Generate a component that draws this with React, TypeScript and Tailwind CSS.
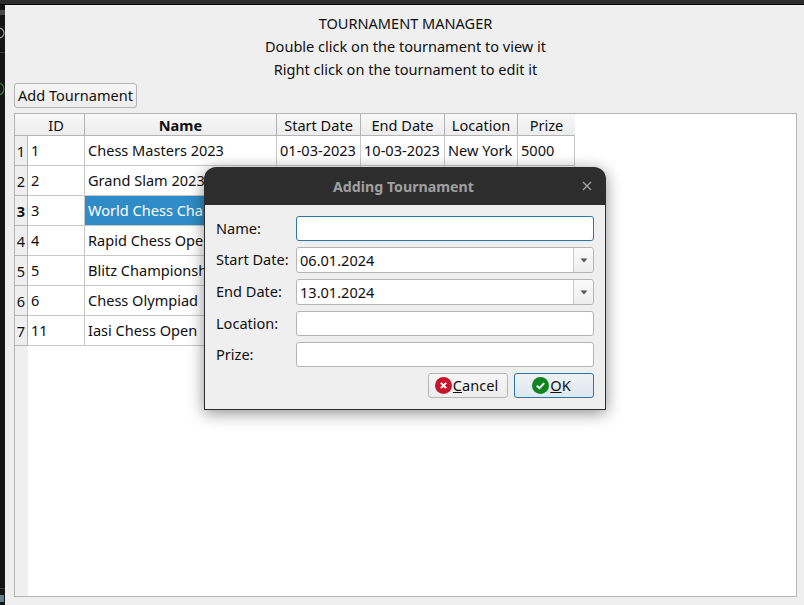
const cols = [
  { w: "w-[57px]", label: "ID" },
  { w: "w-[192px]", label: "Name", bold: true },
  { w: "w-[84px]", label: "Start Date" },
  { w: "w-[84px]", label: "End Date" },
  { w: "w-[73px]", label: "Location" },
  { w: "w-[57px]", label: "Prize" },
];

const rows = [
  ["1", "Chess Masters 2023", "01-03-2023", "10-03-2023", "New York", "5000"],
  ["2", "Grand Slam 2023", "", "", "", ""],
  ["3", "World Chess Championship", "", "", "", ""],
  ["4", "Rapid Chess Open", "", "", "", ""],
  ["5", "Blitz Championship", "", "", "", ""],
  ["6", "Chess Olympiad", "", "", "", ""],
  ["11", "Iasi Chess Open", "", "", "", ""],
];

function Table() {
  return (
    <div className="flex h-[484px] w-[783px] flex-col border border-[#b4b4b4] bg-white">
      <div className="flex h-[22px] w-full">
        <div className="h-[22px] w-[13px] shrink-0 border-b border-[#b4b4b4] bg-gradient-to-b from-[#f9f9f9] to-[#ececec]" />
        {cols.map((c) => (
          <div
            key={c.label}
            className={`${c.w} flex h-[22px] shrink-0 items-center justify-center border-b border-r border-[#b4b4b4] bg-gradient-to-b from-[#f9f9f9] to-[#ececec] pt-[1px] last:border-r-0 ${c.bold ? "font-bold" : ""}`}
          >
            {c.label}
          </div>
        ))}
      </div>
      {rows.map((r, i) => (
        <div key={r[0]} className="flex h-[30px]">
          <div
            className={`flex h-[30px] w-[13px] shrink-0 items-center justify-center border-b border-r border-[#b4b4b4] bg-[#efefef] pt-[1px] ${i === 2 ? "font-bold" : ""}`}
          >
            {i + 1}
          </div>
          {r.map((v, j) => (
            <div
              key={j}
              className={`${cols[j].w} flex h-[30px] shrink-0 items-center overflow-hidden whitespace-nowrap border-b border-r border-[#c8c8c8] pb-[2px] pl-[3px] ${i === 2 && j === 1 ? "bg-[#308cc6] text-white" : ""}`}
            >
              {v}
            </div>
          ))}
        </div>
      ))}
      <div className="w-[13px] flex-1 bg-[#efefef]" />
    </div>
  );
}

function Field({ label, value, h, focus, combo }: { label: string; value?: string; h: string; focus?: boolean; combo?: boolean }) {
  return (
    <div className="flex items-center">
      <div className="w-[80px] shrink-0 pb-[2px]">{label}</div>
      <div
        className={`${h} flex w-[298px] items-center rounded-[3px] border bg-white ${focus ? "border-[#2a76a8]" : "border-[#b4b4b4]"}`}
      >
        <div className="flex-1 pb-[1px] pl-[3px]">{value}</div>
        {combo && (
          <div className="flex h-full w-[20px] items-center justify-center rounded-r-[3px] border-l border-[#c8c8c8] bg-gradient-to-b from-[#fbfbfb] to-[#eeeeee]">
            <svg width="8" height="5" viewBox="0 0 8 5"><path d="M0.5 0.5H7.5L4 4.5Z" fill="#555555" /></svg>
          </div>
        )}
      </div>
    </div>
  );
}

function Dialog() {
  return (
    <div className="absolute left-[204px] top-[167px] w-[402px] rounded-t-[12px] shadow-[0_3px_16px_rgba(0,0,0,0.45)]">
      <div className="relative flex h-[38px] items-center justify-center rounded-t-[12px] bg-[#2d2d2d] pr-[3px] pt-[2px] text-[14.2px] font-bold text-[#a0a0a0]">
        Adding Tournament
        <svg className="absolute right-[14px] top-[14px]" width="10" height="10" viewBox="0 0 10 10">
          <path d="M1 1L9 9M9 1L1 9" stroke="#a8a8a8" strokeWidth="1.2" />
        </svg>
      </div>
      <div className="flex h-[205px] flex-col gap-[6px] border border-t-0 border-[#2d2d2d] bg-[#efefef] pl-[11px] pt-[11px]">
        <Field label="Name:" h="h-[25px]" focus />
        <Field label="Start Date:" value="06.01.2024" h="h-[26px]" combo />
        <Field label="End Date:" value="13.01.2024" h="h-[26px]" combo />
        <Field label="Location:" h="h-[25px]" />
        <Field label="Prize:" h="h-[25px]" />
        <div className="flex h-[25px] w-[378px] justify-end gap-[6px]">
          <button className="flex h-[25px] w-[80px] items-center justify-center gap-[1px] rounded-[3px] border border-[#b4b4b4] bg-gradient-to-b from-[#f6f6f6] to-[#ededed] pr-[3px]">
            <svg width="17" height="17" viewBox="0 0 16 16">
              <circle cx="8" cy="8" r="8" fill="#c7162b" />
              <path d="M5.5 5.5L10.5 10.5M10.5 5.5L5.5 10.5" stroke="#ffffff" strokeWidth="1.8" />
            </svg>
            <span className="pb-[1px]"><span className="underline">C</span>ancel</span>
          </button>
          <button className="flex h-[25px] w-[80px] items-center justify-center gap-[1px] rounded-[3px] border border-[#2a76a8] bg-gradient-to-b from-[#eef2f5] to-[#dfe8ee] pr-[5px]">
            <svg width="17" height="17" viewBox="0 0 16 16">
              <circle cx="8" cy="8" r="8" fill="#0e8420" />
              <path d="M4.5 8.2L7 10.5L11.5 5.8" stroke="#ffffff" strokeWidth="1.8" fill="none" />
            </svg>
            <span className="pb-[1px]"><span className="underline">O</span>K</span>
          </button>
        </div>
      </div>
    </div>
  );
}

export default function App() {
  return (
    <div
      className="relative flex h-[605px] w-[804px] flex-col overflow-hidden bg-[#111315] text-[14.55px] leading-[18px] text-[#101010]"
      style={{ fontFamily: '"Noto Sans", sans-serif' }}
    >
      <div className="h-[5px] shrink-0 border-b border-black bg-[#2e2e2e]" />
      <div className="flex flex-1">
        <div className="w-[5px] shrink-0 bg-[#131517]">
          <svg width="5" height="600" viewBox="0 0 5 600">
            <rect x="0" y="5" width="5" height="5" fill="#4a4a4a" />
            <circle cx="-1" cy="28" r="5" fill="none" stroke="#9a9a9a" strokeWidth="1.2" />
            <rect x="0" y="47" width="5" height="1" fill="#3a3a3a" />
            <circle cx="-2" cy="84" r="6" fill="none" stroke="#3f7a3a" strokeWidth="1.2" />
            <rect x="0" y="583" width="5" height="1" fill="#3a3a3a" />
            <rect x="0" y="590" width="4" height="7" fill="#5f7f8a" />
          </svg>
        </div>
        <div className="flex flex-1 flex-col bg-[#efefef] pl-[9px] pr-[7px]">
          <div className="flex flex-col items-center pt-[7px] leading-[23px]">
            <div>TOURNAMENT MANAGER</div>
            <div>Double click on the tournament to view it</div>
            <div>Right click on the tournament to edit it</div>
          </div>
          <button className="mt-[2px] h-[25px] w-[123px] rounded-[3px] border border-[#b4b4b4] bg-gradient-to-b from-[#f6f6f6] to-[#ededed] pb-[1px]">
            Add Tournament
          </button>
          <div className="mt-[5px]">
            <Table />
          </div>
        </div>
      </div>
      <Dialog />
    </div>
  );
}
